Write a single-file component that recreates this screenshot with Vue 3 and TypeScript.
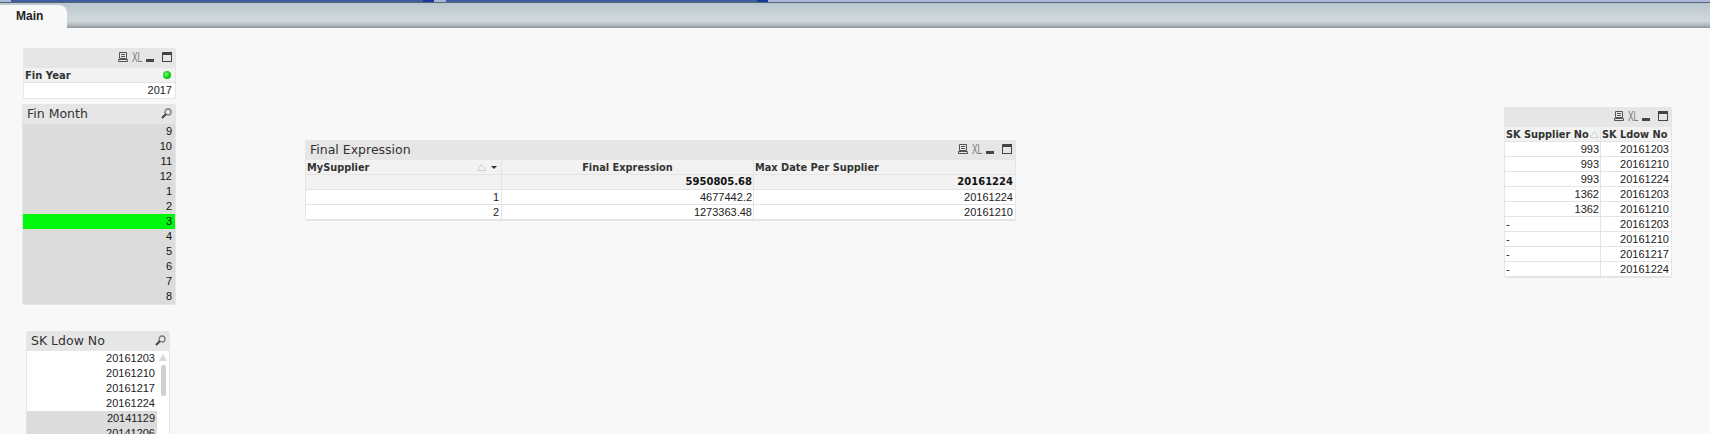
<template>
  <div class="page">
    <!-- top window strip -->
    <div class="top-strip">
      <span class="strip-start"></span>
      <span class="strip-a"></span>
      <span class="strip-hl"></span>
      <span class="strip-b"></span>
      <span class="strip-hl"></span>
      <span class="strip-c"></span>
    </div>
    <div class="tab-bar">
      <div class="tab">Main</div>
    </div>

    <!-- sheet objects sit on a free canvas -->
    <div class="sheet">
      <section class="box fin-year">
        <div class="caption">
          <span class="caption-text"></span>
          <span class="icons">
            <svg width="10" height="10" viewBox="0 0 10 10"><path d="M1.5.5h7v6h-7zM3 2.5h4M3 4.5h4M.5 7.5h9v2h-9z" fill="none" stroke="#555" /></svg>
            <span class="xl"><span>XL</span></span>
            <i class="min"></i>
            <i class="max"></i>
          </span>
        </div>
        <div class="year-head"><b>Fin Year</b><i class="led"></i></div>
        <div class="year-val">2017</div>
      </section>

      <section class="box fin-month">
        <div class="caption">
          <span class="caption-text">Fin Month</span>
          <svg width="11" height="11" viewBox="0 0 11 11"><circle cx="7" cy="4" r="3" fill="none" stroke="#777" stroke-width="1.3" /><path d="M5 6L1 10" stroke="#444" stroke-width="2" /></svg>
        </div>
        <div v-for="m in months" :key="m" class="list-row" :class="{ picked: m === 3 }">{{ m }}</div>
      </section>

      <section class="box sk-list">
        <div class="caption">
          <span class="caption-text">SK Ldow No</span>
          <svg width="11" height="11" viewBox="0 0 11 11"><circle cx="7" cy="4" r="3" fill="none" stroke="#777" stroke-width="1.3" /><path d="M5 6L1 10" stroke="#444" stroke-width="2" /></svg>
        </div>
        <div class="sk-body">
          <div class="sk-rows">
            <div v-for="d in skDates" :key="d.v" class="sk-row" :class="{ off: d.off }">{{ d.v }}</div>
          </div>
          <div class="scroll">
            <i class="arrow"></i>
            <i class="thumb"></i>
          </div>
        </div>
      </section>

      <section class="box final">
        <div class="caption">
          <span class="caption-text">Final Expression</span>
          <span class="icons">
            <svg width="10" height="10" viewBox="0 0 10 10"><path d="M1.5.5h7v6h-7zM3 2.5h4M3 4.5h4M.5 7.5h9v2h-9z" fill="none" stroke="#555" /></svg>
            <span class="xl"><span>XL</span></span>
            <i class="min"></i>
            <i class="max"></i>
          </span>
        </div>
        <div class="grid head">
          <div class="cell left sup-head">
            MySupplier
            <span class="sorts">
              <svg width="9" height="7" viewBox="0 0 9 7"><path d="M4.5.5L8.5 6.5H.5z" fill="#f6f6f6" stroke="#d0d0d0" /></svg>
              <svg width="6" height="3" viewBox="0 0 6 3"><path d="M0 0h6L3 3z" fill="#333" /></svg>
            </span>
          </div>
          <div class="cell center">Final Expression</div>
          <div class="cell left">Max Date Per Supplier</div>
        </div>
        <div class="grid total">
          <div class="cell"></div>
          <div class="cell right">5950805.68</div>
          <div class="cell right">20161224</div>
        </div>
        <div v-for="r in finalRows" :key="r.id" class="grid row">
          <div class="cell right">{{ r.id }}</div>
          <div class="cell right">{{ r.expr }}</div>
          <div class="cell right">{{ r.max }}</div>
        </div>
      </section>

      <section class="box sk-table">
        <div class="caption">
          <span class="caption-text"></span>
          <span class="icons">
            <svg width="10" height="10" viewBox="0 0 10 10"><path d="M1.5.5h7v6h-7zM3 2.5h4M3 4.5h4M.5 7.5h9v2h-9z" fill="none" stroke="#555" /></svg>
            <span class="xl"><span>XL</span></span>
            <i class="min"></i>
            <i class="max"></i>
          </span>
        </div>
        <div class="grid2 head">
          <div class="cell left sup-head">
            SK Supplier No
            <svg width="9" height="7" viewBox="0 0 9 7"><path d="M4.5.5L8.5 6.5H.5z" fill="#f6f6f6" stroke="#d0d0d0" /></svg>
          </div>
          <div class="cell left">SK Ldow No</div>
        </div>
        <div v-for="(r, i) in skRows" :key="i" class="grid2 row">
          <div class="cell" :class="r.sup === '-' ? 'left' : 'right'">{{ r.sup }}</div>
          <div class="cell right">{{ r.ldow }}</div>
        </div>
      </section>
    </div>
  </div>
</template>

<script setup lang="ts">
const months: number[] = [9, 10, 11, 12, 1, 2, 3, 4, 5, 6, 7, 8]

const skDates = [
  { v: '20161203', off: false },
  { v: '20161210', off: false },
  { v: '20161217', off: false },
  { v: '20161224', off: false },
  { v: '20141129', off: true },
  { v: '20141206', off: true },
]

const finalRows = [
  { id: 1, expr: '4677442.2', max: '20161224' },
  { id: 2, expr: '1273363.48', max: '20161210' },
]

const skRows = [
  { sup: '993', ldow: '20161203' },
  { sup: '993', ldow: '20161210' },
  { sup: '993', ldow: '20161224' },
  { sup: '1362', ldow: '20161203' },
  { sup: '1362', ldow: '20161210' },
  { sup: '-', ldow: '20161203' },
  { sup: '-', ldow: '20161210' },
  { sup: '-', ldow: '20161217' },
  { sup: '-', ldow: '20161224' },
]
</script>

<style>
html,
body {
  margin: 0;
  background: #f8f8f8;
  overflow: hidden;
}
</style>

<style scoped>
.page {
  width: 1710px;
  height: 434px;
  overflow: hidden;
  background: #f8f8f8;
  font-family: 'Liberation Sans', Arial, sans-serif;
  font-size: 11px;
  color: #222;
  display: flex;
  flex-direction: column;
}

/* ========= top ========= */
.top-strip {
  display: flex;
  height: 3px;
  flex-shrink: 0;
  background: #3f5c9e;
  border-bottom: 1px solid #5c6470;
  box-sizing: border-box;
}
.strip-start { width: 11px; background: #a9b9de; }
.strip-a { width: 412px; }
.strip-b { width: 311px; }
.strip-hl {
  width: 23px;
  background: linear-gradient(90deg, #123a9a 50%, #a9b9de 50%);
}
.strip-c { flex: 1; background: #a9b9de; }

.tab-bar {
  height: 25px;
  flex-shrink: 0;
  background: linear-gradient(#b8c7ce, #d2d9de 72%, #b4babd 88%, #8e9396);
  display: flex;
  align-items: flex-end;
}
.tab {
  width: 67px;
  height: 23px;
  background: #f8f8f8;
  border-top-right-radius: 8px;
  font-weight: 700;
  font-size: 12px;
  line-height: 23px;
  padding-left: 16px;
  box-sizing: border-box;
  color: #222;
}

/* ========= canvas ========= */
.sheet {
  position: relative;
  flex: 1;
}
.box {
  position: absolute;
  box-sizing: border-box;
  border-radius: 2px;
  background: #fff;
  border: 1px solid #e6e6e6;
  border-top: none;
}
.fin-year { left: 23px; top: 20px; width: 153px; height: 51px; }
.fin-month { left: 22px; top: 76px; width: 154px; height: 201px; background: #dcdcdc; }
.sk-list { left: 26px; top: 303px; width: 144px; height: 120px; overflow: hidden; }
.final { left: 305px; top: 112px; width: 711px; height: 81px; }
.sk-table { left: 1504px; top: 79px; width: 168px; height: 171px; }

.caption {
  height: 20px;
  background: #e6e6e6;
  display: flex;
  align-items: center;
  justify-content: space-between;
  padding: 0 3px 2px 4px;
  box-sizing: border-box;
}
.caption-text {
  font-family: 'DejaVu Sans', sans-serif;
  font-size: 12.5px;
  color: #333;
}
.icons {
  display: flex;
  align-items: flex-end;
  height: 10px;
  gap: 4px;
}
.xl {
  width: 10px;
  height: 10px;
  font-size: 14px;
  line-height: 10px;
  color: #777;
}
.xl span {
  display: inline-block;
  transform: scaleX(0.6);
  transform-origin: left;
}
.min {
  width: 8px;
  height: 3px;
  background: #444;
}
.max {
  width: 10px;
  height: 10px;
  box-sizing: border-box;
  border: 1px solid #444;
  border-top-width: 3px;
  margin-left: 4px;
}

/* ========= fin year ========= */
.year-head {
  height: 15px;
  background: #f2f2f2;
  border-bottom: 1px solid #e2e2e2;
  display: flex;
  align-items: center;
  justify-content: space-between;
  padding: 0 4px 0 1px;
  box-sizing: border-box;
  font-family: 'DejaVu Sans', sans-serif;
  font-size: 10px;
  color: #333;
}
.led {
  width: 8px;
  height: 8px;
  border-radius: 50%;
  background: radial-gradient(circle at 40% 40%, #6cff6c, #00c000 65%, #668866);
}
.year-val {
  height: 15px;
  line-height: 15px;
  text-align: right;
  padding-right: 3px;
}

/* ========= list boxes ========= */
.list-row {
  height: 15px;
  line-height: 15px;
  text-align: right;
  padding-right: 3px;
  color: #111;
  background: #dcdcdc;
}
.list-row.picked { background: #00f80a; }

.sk-body { display: flex; }
.sk-rows { width: 130px; flex-shrink: 0; }
.sk-row {
  height: 15px;
  line-height: 15px;
  text-align: right;
  padding-right: 2px;
}
.sk-row.off { background: #dcdcdc; }
.scroll {
  flex: 1;
  display: flex;
  flex-direction: column;
  align-items: center;
  padding-top: 3px;
  gap: 4px;
}
.arrow {
  width: 0;
  height: 0;
  border-left: 4px solid transparent;
  border-right: 4px solid transparent;
  border-bottom: 7px solid #d8d8d8;
}
.thumb {
  width: 5px;
  height: 31px;
  background: #cfcfcf;
  border-radius: 2px;
}

/* ========= tables ========= */
.grid {
  display: grid;
  grid-template-columns: 196px 252px 1fr;
}
.grid2 {
  display: grid;
  grid-template-columns: 96px 1fr;
}
.cell {
  height: 15px;
  line-height: 14px;
  box-sizing: border-box;
  padding: 0 1px 0 1px;
  border-right: 1px solid #e4e4e4;
  border-bottom: 1px solid #e4e4e4;
  white-space: nowrap;
}
.cell:last-child { border-right: none; padding-right: 2px; }
.grid .cell:first-child { padding-right: 2px; }
.left { text-align: left; }
.right { text-align: right; }
.center { text-align: center; }
.head .cell {
  background: #f2f2f2;
  font-family: 'DejaVu Sans', sans-serif;
  font-weight: 700;
  font-size: 9.8px;
  line-height: 15px;
  color: #333;
}
.total .cell {
  background: #f2f2f2;
  font-family: 'DejaVu Sans', sans-serif;
  font-weight: 700;
  font-size: 10px;
  line-height: 13px;
  color: #111;
}
.row .cell { background: #fff; }
.sup-head {
  display: flex;
  align-items: center;
  justify-content: space-between;
}
.sorts {
  display: flex;
  align-items: center;
  gap: 5px;
  padding-right: 2px;
}
</style>
